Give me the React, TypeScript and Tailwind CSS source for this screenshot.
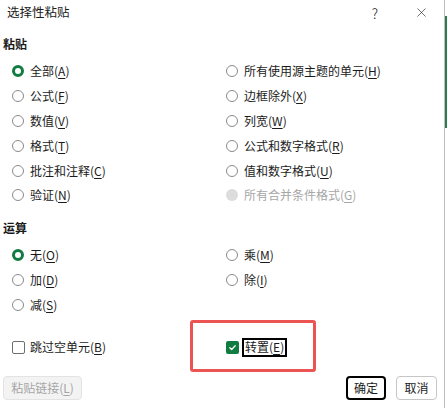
import React from 'react';
import { X } from 'lucide-react';

type Opt = { label: string; key: string; checked?: boolean; disabled?: boolean };

const Label: React.FC<{ o: Opt }> = ({ o }) => (
  <span className={o.disabled ? 'text-[#a6a6a6]' : 'text-[#1b1b1b]'}>
    {o.label}(<span className="underline underline-offset-2">{o.key}</span>)
  </span>
);

const Radio: React.FC<{ o: Opt }> = ({ o }) => (
  <div className="h-[24.8px] flex items-center gap-[6px]">
    {o.checked ? (
      <span className="w-[12px] h-[12px] rounded-full border-[3.5px] border-[#107c41] bg-white" />
    ) : o.disabled ? (
      <span className="w-[12px] h-[12px] rounded-full bg-[#dcdcdc]" />
    ) : (
      <span className="w-[12px] h-[12px] rounded-full border border-[#8a8a8a] bg-white" />
    )}
    <Label o={o} />
  </div>
);

const pasteLeft: Opt[] = [
  { label: '全部', key: 'A', checked: true },
  { label: '公式', key: 'F' },
  { label: '数值', key: 'V' },
  { label: '格式', key: 'T' },
  { label: '批注和注释', key: 'C' },
  { label: '验证', key: 'N' },
];

const pasteRight: Opt[] = [
  { label: '所有使用源主题的单元', key: 'H' },
  { label: '边框除外', key: 'X' },
  { label: '列宽', key: 'W' },
  { label: '公式和数字格式', key: 'R' },
  { label: '值和数字格式', key: 'U' },
  { label: '所有合并条件格式', key: 'G', disabled: true },
];

const opLeft: Opt[] = [
  { label: '无', key: 'O', checked: true },
  { label: '加', key: 'D' },
  { label: '减', key: 'S' },
];

const opRight: Opt[] = [
  { label: '乘', key: 'M' },
  { label: '除', key: 'I' },
];

const App: React.FC = () => {
  return (
    <div
      className="w-[448px] h-[408px] flex bg-white text-[12px] leading-none overflow-hidden"
      style={{ fontFamily: '"Noto Sans CJK SC", "Noto Sans", sans-serif' }}
    >
      <div className="relative w-[445px] h-full border-r border-[#bdbdbd] flex flex-col">
        {/* Title bar */}
        <div className="h-[25px] flex items-center pl-[7px] pr-[15px] text-[#1b1b1b]">
          <span className="text-[12.5px]">选择性粘贴</span>
          <span className="ml-auto text-[14px] font-light mr-[36px]">?</span>
          <X size={15} strokeWidth={1.1} className="text-[#333]" />
        </div>

        {/* Paste section */}
        <div className="mt-[11px] pl-[3px] h-[16px] flex items-center font-bold text-[#1b1b1b]">粘贴</div>
        <div className="mt-[7px] grid grid-cols-[214px_1fr] pl-[12px]">
          <div className="flex flex-col">
            {pasteLeft.map((o) => (
              <Radio key={o.key} o={o} />
            ))}
          </div>
          <div className="flex flex-col">
            {pasteRight.map((o) => (
              <Radio key={o.key} o={o} />
            ))}
          </div>
        </div>

        {/* Operation section */}
        <div className="mt-[12px] pl-[3px] h-[16px] flex items-center font-bold text-[#1b1b1b]">运算</div>
        <div className="mt-[7px] grid grid-cols-[214px_1fr] pl-[12px]">
          <div className="flex flex-col">
            {opLeft.map((o) => (
              <Radio key={o.key} o={o} />
            ))}
          </div>
          <div className="flex flex-col">
            {opRight.map((o) => (
              <Radio key={o.key} o={o} />
            ))}
          </div>
        </div>

        {/* Checkboxes */}
        <div className="mt-[20px] grid grid-cols-[214px_1fr] pl-[12px] h-[20px] items-center">
          <div className="flex items-center gap-[5px]">
            <span className="w-[13px] h-[13px] rounded-[2px] border border-[#6e6e6e] bg-white" />
            <Label o={{ label: '跳过空单元', key: 'B' }} />
          </div>
          <div className="flex items-center gap-[3px]">
            <span className="w-[13px] h-[13px] rounded-[2px] bg-[#107c41] flex items-center justify-center">
              <svg width="9" height="9" viewBox="0 0 10 10" fill="none">
                <path d="M2 5.2 L4.1 7.2 L8 3" stroke="white" strokeWidth="1.4" strokeLinecap="round" strokeLinejoin="round" />
              </svg>
            </span>
            <span className="border-2 border-black px-[1px] h-[19px] flex items-center">
              <Label o={{ label: '转置', key: 'E' }} />
            </span>
          </div>
        </div>

        {/* Buttons */}
        <div className="mt-[19px] flex items-center pl-[3px] pr-[7px]">
          <button className="w-[79px] h-[24px] rounded-[4px] border border-[#e3e3e3] bg-[#f3f3f3] text-[#a6a6a6]">
            粘贴链接(<span className="underline underline-offset-2">L</span>)
          </button>
          <button className="ml-auto w-[40px] h-[24px] rounded-[4px] border-2 border-black bg-white text-[#1b1b1b]">
            确定
          </button>
          <button className="ml-[10px] w-[41px] h-[24px] rounded-[4px] border border-[#c6c6c6] bg-white text-[#1b1b1b]">
            取消
          </button>
        </div>

        {/* Annotation highlight */}
        <div className="absolute left-[190px] top-[320px] w-[126px] h-[52px] border-[3px] border-[#ec5454] rounded-[3px] pointer-events-none" />
      </div>
      <div className="w-[3px] h-full bg-white flex flex-col">
        <div className="mt-[16px] h-[112px] w-[2px] bg-[#2e7d4f]" />
      </div>
    </div>
  );
};

export default App;
